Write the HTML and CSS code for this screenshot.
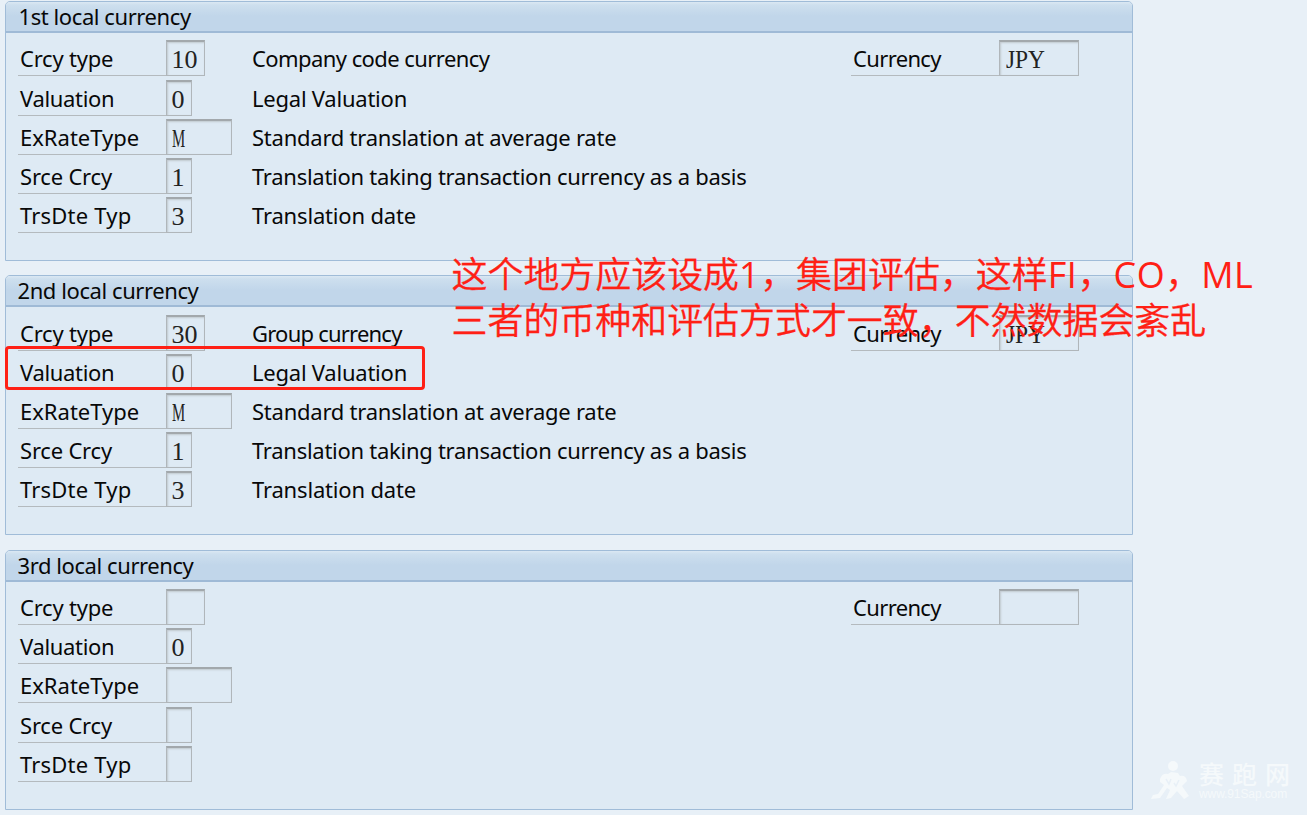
FILE: index.html
```
<!DOCTYPE html>
<html lang="en">
<head>
<meta charset="utf-8">
<title>Local currencies</title>
<link rel="stylesheet" href="styles.css">
</head>
<body>
<main class="screen">
  <section class="panel">
    <h2 class="panel-title first">1st local currency</h2>
    <div class="panel-body">
      <div class="rows">
        <div class="row"><span class="label crcy">Crcy type</span><span class="field two">10</span><span class="desc d1">Company code currency</span></div>
        <div class="row"><span class="label val">Valuation</span><span class="field one">0</span><span class="desc d2">Legal Valuation</span></div>
        <div class="row"><span class="label rate">ExRateType</span><span class="field four"><span class="m">M</span></span><span class="desc d3">Standard translation at average rate</span></div>
        <div class="row"><span class="label srce">Srce Crcy</span><span class="field one">1</span><span class="desc d4">Translation taking transaction currency as a basis</span></div>
        <div class="row"><span class="label trs">TrsDte Typ</span><span class="field one">3</span><span class="desc d5">Translation date</span></div>
      </div>
      <div class="row"><span class="label cur">Currency</span><span class="field five"><span class="code">JPY</span></span></div>
    </div>
  </section>
  <section class="panel">
    <h2 class="panel-title">2nd local currency</h2>
    <div class="panel-body">
      <div class="rows">
        <div class="row"><span class="label crcy">Crcy type</span><span class="field two">30</span><span class="desc d6">Group currency</span></div>
        <div class="row"><span class="label val">Valuation</span><span class="field one">0</span><span class="desc d2">Legal Valuation</span></div>
        <div class="row"><span class="label rate">ExRateType</span><span class="field four"><span class="m">M</span></span><span class="desc d3">Standard translation at average rate</span></div>
        <div class="row"><span class="label srce">Srce Crcy</span><span class="field one">1</span><span class="desc d4">Translation taking transaction currency as a basis</span></div>
        <div class="row"><span class="label trs">TrsDte Typ</span><span class="field one">3</span><span class="desc d5">Translation date</span></div>
      </div>
      <div class="row"><span class="label cur">Currency</span><span class="field five"><span class="code">JPY</span></span></div>
    </div>
    <div class="highlight"></div>
    <div class="note" lang="zh-CN"><div>这个地方应该设成<span class="latin">1</span>，集团评估，这样<span class="latin">FI</span>，<span class="latin">CO</span>，<span class="latin">ML</span></div><div>三者的币种和评估方式才一致，不然数据会紊乱</div></div>
  </section>
  <section class="panel">
    <h2 class="panel-title">3rd local currency</h2>
    <div class="panel-body">
      <div class="rows">
        <div class="row"><span class="label crcy">Crcy type</span><span class="field two"></span></div>
        <div class="row"><span class="label val">Valuation</span><span class="field one">0</span></div>
        <div class="row"><span class="label rate">ExRateType</span><span class="field four"></span></div>
        <div class="row"><span class="label srce">Srce Crcy</span><span class="field one"></span></div>
        <div class="row"><span class="label trs">TrsDte Typ</span><span class="field one"></span></div>
      </div>
      <div class="row"><span class="label cur">Currency</span><span class="field five"></span></div>
    </div>
  </section>
  <div class="watermark" lang="zh-CN">
    <svg class="runner" viewBox="0 0 40 40" width="40" height="40"><circle cx="22" cy="6" r="5"/><path d="M9 19Q11 13 17 14L20 12L27 13L29 16Q35 15 36 21L31 26L38 36L33 39L26 31L20 38L15 39L19 30L16 28L9 38L0 39L2 35L7 34L13 25L9 22Z"/><path class="gap" d="M15 19L18 24L20 19M28 20L25 26L23 23"/></svg>
    <div><div class="brand">赛跑网</div><div class="site">www.91Sap.com</div></div>
  </div>
</main>
</body>
</html>
```
FILE: styles.css
```
* { box-sizing: border-box; }
body {
  margin: 0;
  background: #e8f0f7;
  color: #080808;
  font-family: "Noto Sans", "Open Sans", sans-serif;
  font-size: 22px;
  overflow: hidden;
}
.screen {
  position: relative;
  width: 1307px;
  height: 815px;
  padding: 1px 0 0 4.5px;
  display: flex;
  flex-direction: column;
  gap: 14.3px;
}
.panel {
  position: relative;
  width: 1128.5px;
  height: 260px;
  flex: none;
  border: 1.500px solid #a0bcd8;
  border-radius: 5px 5px 0 0;
  background: #deeaf4;
}
.panel-title {
  margin: 0;
  height: 31px;
  padding-left: 12px;
  border-bottom: 2px solid #9fbad6;
  border-radius: 4px 4px 0 0;
  background: linear-gradient(#dbe8f3 0, #cddfee 3px, #c1d6ea 14px, #c1d6ea);
  font-size: 22px;
  font-weight: 400;
  line-height: 28px;
  letter-spacing: -.42px;
  white-space: nowrap;
}
.first { padding-left: 13px; }
.panel-body {
  display: grid;
  grid-template-columns: 833px auto;
  justify-content: start;
  padding: 7.400px 0 0 12.500px;
}
.rows { display: flex; flex-direction: column; gap: 3.2px; }
.row { display: flex; height: 36px; white-space: nowrap; }
.label {
  width: 148px;
  height: 36px;
  padding-left: 2px;
  border-bottom: 1.500px solid #b4babe;
  line-height: 36px;
}
.crcy { letter-spacing: -.22px; }
.val { letter-spacing: -.33px; }
.srce { letter-spacing: -.2px; }
.trs { letter-spacing: .2px; }
.cur { letter-spacing: -.65px; }
.field {
  height: 36px;
  border: 1.500px solid #b0b6ba;
  border-top: 2px solid #a2a8ac;
  box-shadow: inset 1px 1px 2px #c1c9cf;
  padding-left: 4.5px;
  font-family: "Liberation Serif", serif;
  font-size: 26px;
  line-height: 35px;
  color: #222;
}
.one { width: 26px; }
.two { width: 39px; }
.four { width: 66px; }
.five { width: 80px; padding-left: 6px; }
.m, .code { display: inline-block; transform-origin: 0 50%; }
.m { transform: scaleX(.57); }
.code { transform: scaleX(.9); }
.desc { line-height: 36px; }
.d1 { letter-spacing: -.57px; }
.d2 { letter-spacing: -.23px; }
.d3 { letter-spacing: -.24px; }
.d4 { letter-spacing: -.27px; }
.d5 { letter-spacing: -.17px; }
.d6 { letter-spacing: -.78px; }
.two + .desc { margin-left: 47px; }
.one + .desc { margin-left: 60px; }
.four + .desc { margin-left: 20px; }
.highlight {
  position: absolute;
  left: -1px;
  top: 70px;
  width: 420px;
  height: 43.500px;
  border: 3px solid #ff2015;
  border-radius: 4px;
}
.note {
  position: absolute;
  left: 446px;
  top: -27px;
  color: #ff2015;
  font-family: "Noto Sans CJK SC", sans-serif;
  font-size: 35.95px;
  font-weight: 350;
  line-height: 46px;
  white-space: nowrap;
  -webkit-text-stroke: .3px #ff2015;
}
.latin {
  font-family: "Open Sans", sans-serif;
  font-weight: 400;
  line-height: 1;
  letter-spacing: .6px;
  -webkit-text-stroke: 0;
}
.watermark {
  position: absolute;
  left: 1151px;
  top: 760px;
  display: flex;
  gap: 8px;
  color: #f5f9fb;
}
.runner { fill: #f5f9fb; }
.gap { fill: none; stroke: #e8f0f7; stroke-width: 1.5; }
.brand {
  font-family: "Noto Sans CJK SC", sans-serif;
  font-size: 25px;
  font-weight: 500;
  line-height: 27px;
  letter-spacing: 8px;
}
.site {
  font-family: "Liberation Sans", sans-serif;
  font-size: 12px;
  line-height: 15px;
  letter-spacing: -.1px;
}
```
